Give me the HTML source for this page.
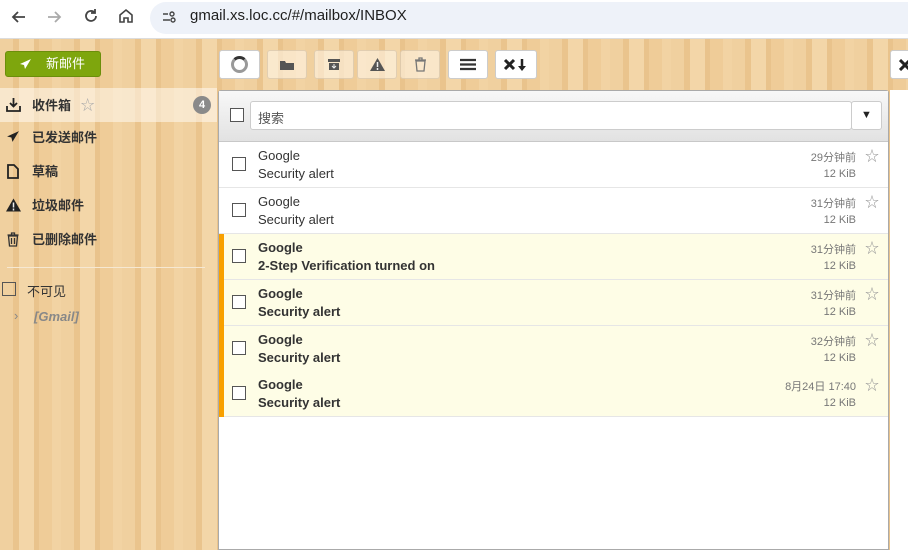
<!DOCTYPE html>
<html><head><meta charset="utf-8"><style>
*{margin:0;padding:0;box-sizing:border-box}
body{width:908px;height:550px;overflow:hidden;font-family:"Liberation Sans","Noto Sans CJK SC",sans-serif;font-size:13px;color:#333;position:relative;
background:repeating-linear-gradient(90deg,#f0d09f 0 13px,#eac48d 13px 19px,#f3d6a8 19px 34px,#e9c38c 34px 39px,#efcc98 39px 52px,#f2d3a3 52px 61px);}
.top{position:absolute;left:0;top:0;width:908px;height:39px;background:#fff;border-bottom:1px solid #dcdcdc}
.pill{position:absolute;left:150px;top:2px;width:800px;height:32px;border-radius:16px;background:#eef2f9}
.url{position:absolute;left:190px;top:7px;font-size:15px;color:#1f1f1f}
.nav{position:absolute;top:6px}
.btn{position:absolute;top:50px;height:29px;border-radius:3px;background:#fff;border:1px solid #ccc;display:flex;align-items:center;justify-content:center}
.btn.dis{background:rgba(255,245,230,.6);border-color:rgba(200,180,150,.5)}
.new{position:absolute;left:5px;top:51px;width:96px;height:26px;background:#7ea60d;border:1px solid #6b8e0a;border-radius:3px;color:#fff;font-size:13px;line-height:24px;padding-left:40px}
.side{position:absolute;left:0;width:217px;height:34px;line-height:34px;font-weight:bold;font-size:13px;padding-left:32px}
.ico{position:absolute;left:6px;top:9px}
.panel{position:absolute;left:218px;top:90px;width:671px;height:460px;background:#fff;border:1px solid #aaa;border-radius:3px 3px 0 0}
.hdr{height:51px;background:linear-gradient(#f8f8f8,#e2e2e2);border-bottom:1px solid #c8c8c8;position:relative}
.cb{position:absolute;width:14px;height:14px;border:1px solid #555;background:#fff}
.row{position:absolute;left:0;width:669px;height:46px;border-bottom:1px solid #e6e6e6}
.row.u{background:#fefde6;font-weight:bold}
.row.u:before{content:"";position:absolute;left:0;top:0;width:5px;height:46px;background:#f8a000}
.f{position:absolute;left:39px;top:6px;font-size:13px}
.s{position:absolute;left:39px;top:24px;font-size:13px}
.d{position:absolute;right:32px;top:7px;font-size:11px;color:#777;font-weight:normal}
.k{position:absolute;right:32px;top:26px;font-size:11px;color:#777;font-weight:normal}
.st{position:absolute;right:9px;top:4px;font-size:14px;color:#999;font-weight:normal}
</style></head><body>
<div class="top">
<svg class="nav" style="left:10px;top:8px" width="18" height="18" viewBox="0 0 18 18"><path d="M15 9H3M8 4L3 9l5 5" fill="none" stroke="#444" stroke-width="1.8"/></svg>
<svg class="nav" style="left:45px;top:8px" width="18" height="18" viewBox="0 0 18 18"><path d="M3 9h12M10 4l5 5-5 5" fill="none" stroke="#aaa" stroke-width="1.8"/></svg>
<svg class="nav" style="left:82px;top:7px" width="18" height="18" viewBox="0 0 18 18"><path d="M14 9a5 5 0 1 1-1.5-3.6M13 2v4h-4" fill="none" stroke="#444" stroke-width="1.8"/></svg>
<svg class="nav" style="left:117px;top:7px" width="18" height="18" viewBox="0 0 18 18"><path d="M3 8l6-5 6 5v7h-4v-4H7v4H3z" fill="none" stroke="#444" stroke-width="1.6"/></svg>
<div class="pill"></div>
<svg class="nav" style="left:161px;top:9px" width="16" height="16" viewBox="0 0 16 16"><path d="M2 5h5M2 11h7" stroke="#444" stroke-width="1.5"/><circle cx="11" cy="5" r="2" fill="none" stroke="#444" stroke-width="1.4"/><circle cx="12" cy="11" r="2" fill="none" stroke="#444" stroke-width="1.4"/></svg>
<div class="url">gmail.xs.loc.cc/#/mailbox/INBOX</div></div>
<div class="new"><svg style="position:absolute;left:13px;top:6px" width="13" height="13" viewBox="0 0 13 13"><path d="M12 1L1 6l4 1 1 4z" fill="#fff"/></svg>新邮件</div>
<div class="btn" style="left:219px;width:41px"><span style="display:inline-block;width:17px;height:17px;border:3px solid #999;border-top-color:#333;border-radius:50%"></span></div>
<div class="btn dis" style="left:267px;width:40px"><svg width="16" height="12"><path d="M1 2h5l1 2h8v7H1z" fill="#555"/></svg></div>
<div class="btn dis" style="left:314px;width:40px"><svg width="14" height="13"><path d="M1 1h12v3H1zM2 5h10v7H2z" fill="#555"/><path d="M7 6v4M5 8l2 2 2-2" stroke="#eee" fill="none"/></svg></div>
<div class="btn dis" style="left:357px;width:40px"><svg width="15" height="13"><path d="M7.5 0L15 13H0z" fill="#555"/><path d="M7.5 4v5M7.5 10v2" stroke="#eee" stroke-width="1.5"/></svg></div>
<div class="btn dis" style="left:400px;width:40px"><svg width="13" height="15"><path d="M1 3h11M5 3V1h3v2M2 4l1 10h7l1-10z" fill="none" stroke="#777" stroke-width="1.3"/></svg></div>
<div class="btn" style="left:448px;width:40px"><svg width="16" height="13"><path d="M0 2h16M0 6.5h16M0 11h16" stroke="#333" stroke-width="2.3"/></svg></div>
<div class="btn" style="left:495px;width:42px"><svg width="26" height="14"><path d="M2 2l9 9M11 2l-9 9" stroke="#222" stroke-width="3"/><path d="M19 1v8" stroke="#222" stroke-width="2.5"/><path d="M15 8h8l-4 5z" fill="#222"/></svg></div>
<div class="btn" style="left:890px;width:30px;justify-content:flex-start;padding-left:8px"><svg width="12" height="12"><path d="M1 1l10 10M11 1L1 11" stroke="#222" stroke-width="3"/></svg></div>
<div class="side" style="top:88px;background:rgba(255,250,240,.55)"><svg class="ico" width="15" height="15" viewBox="0 0 15 15"><path d="M7.5 1v8M4 6l3.5 3.5L11 6M1 9v5h13V9" fill="none" stroke="#222" stroke-width="1.8"/></svg>收件箱 <span style="color:#aaa;font-weight:normal;margin-left:6px;font-size:14px">☆</span><span style="position:absolute;left:193px;top:8px;width:18px;height:18px;border-radius:9px;background:#8a8a8a;color:#fff;font-size:11px;line-height:18px;text-align:center">4</span></div>
<div class="side" style="top:121px"><svg class="ico" width="14" height="14" viewBox="0 0 13 13"><path d="M12 1L1 6l4 1 1 4z" fill="#222"/></svg>已发送邮件</div>
<div class="side" style="top:155px"><svg class="ico" width="14" height="15" viewBox="0 0 14 15"><path d="M2 1h6l4 4v9H2z" fill="none" stroke="#222" stroke-width="1.8"/></svg>草稿</div>
<div class="side" style="top:189px"><svg class="ico" width="15" height="14" viewBox="0 0 15 13"><path d="M7.5 0L15 13H0z" fill="#222"/><path d="M7.5 4v5M7.5 10v2" stroke="#eee" stroke-width="1.5"/></svg>垃圾邮件</div>
<div class="side" style="top:223px"><svg class="ico" width="14" height="15" viewBox="0 0 13 15"><path d="M1 3h11M5 3V1h3v2M2 4l1 10h7l1-10zM5 6v6M8 6v6" fill="none" stroke="#333" stroke-width="1.3"/></svg>已删除邮件</div>
<div style="position:absolute;left:7px;top:267px;width:198px;height:1px;background:#f6e8d2"></div>
<div class="cb" style="left:2px;top:282px;background:transparent"></div><div style="position:absolute;left:27px;top:281px;font-size:13px">不可见</div>
<div style="position:absolute;left:14px;top:308px;color:#888">›</div><div style="position:absolute;left:34px;top:309px;color:#888;font-weight:bold;font-style:italic">[Gmail]</div>
<div class="panel"><div class="hdr"><div class="cb" style="left:11px;top:17px"></div>
<div style="position:absolute;left:31px;top:10px;width:602px;height:29px;background:#fff;border:1px solid #ccc;border-radius:3px;padding:6px 7px;color:#555">搜索</div>
<div style="position:absolute;left:632px;top:10px;width:31px;height:29px;background:#fff;border:1px solid #ccc;border-radius:3px;text-align:center;line-height:27px;font-size:11px;color:#222">▼</div></div>
<div class="row" style="top:51px"><div class="cb" style="left:13px;top:15px"></div><div class="f">Google</div><div class="s">Security alert</div><div class="d">29分钟前</div><div class="k">12 KiB</div><div class="st">☆</div></div>
<div class="row" style="top:97px"><div class="cb" style="left:13px;top:15px"></div><div class="f">Google</div><div class="s">Security alert</div><div class="d">31分钟前</div><div class="k">12 KiB</div><div class="st">☆</div></div>
<div class="row u" style="top:143px"><div class="cb" style="left:13px;top:15px"></div><div class="f">Google</div><div class="s">2-Step Verification turned on</div><div class="d">31分钟前</div><div class="k">12 KiB</div><div class="st">☆</div></div>
<div class="row u" style="top:189px"><div class="cb" style="left:13px;top:15px"></div><div class="f">Google</div><div class="s">Security alert</div><div class="d">31分钟前</div><div class="k">12 KiB</div><div class="st">☆</div></div>
<div class="row u" style="top:235px"><div class="cb" style="left:13px;top:15px"></div><div class="f">Google</div><div class="s">Security alert</div><div class="d">32分钟前</div><div class="k">12 KiB</div><div class="st">☆</div></div>
<div class="row u" style="top:280px"><div class="cb" style="left:13px;top:15px"></div><div class="f">Google</div><div class="s">Security alert</div><div class="d">8月24日 17:40</div><div class="k">12 KiB</div><div class="st">☆</div></div>
</div>
<div style="position:absolute;left:890px;top:90px;width:18px;height:460px;background:#fff"></div>
</body></html>
